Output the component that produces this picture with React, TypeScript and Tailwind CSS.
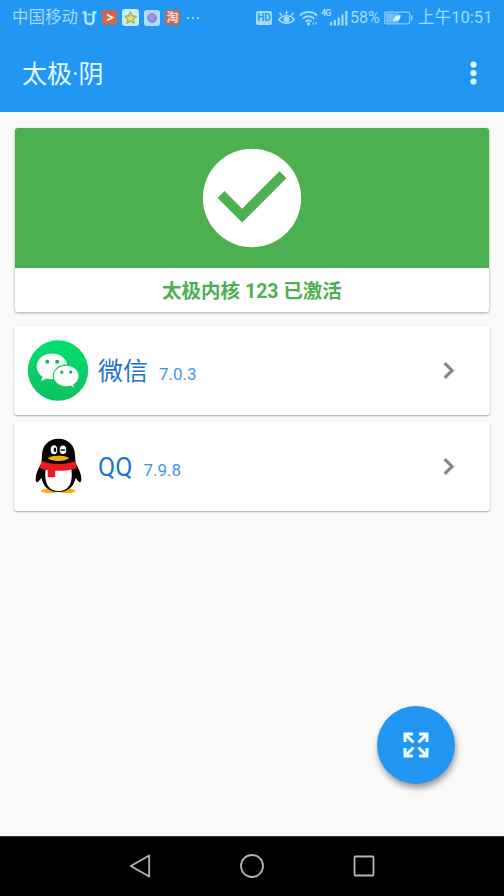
import type { ReactNode } from 'react';

const WechatLogo = () => (
    <svg className="w-[62px] h-[62px]" viewBox="0 0 62 62">
        <defs>
            <linearGradient id="wechatBg" x1="0" y1="0" x2="0" y2="1">
                <stop offset="0" stopColor="#04e06e" />
                <stop offset="1" stopColor="#0cc160" />
            </linearGradient>
        </defs>
        <circle cx="31" cy="30.500" r="30.200" fill="url(#wechatBg)" />
        <path
            d="M25 13.500c-8.600 0-15.300 5.700-15.300 13 0 4.200 2.200 7.800 5.800 10.200l-1.500 4.500 5.300-2.700c1.800.5 3.700.8 5.700.8 8.600 0 15.300-5.600 15.300-12.800S33.600 13.500 25 13.500z"
            fill="#fff"
        />
        <path
            d="M39.200 25.200c-7.200 0-13 4.800-13 10.800s5.800 10.800 13 10.800c1.500 0 3-.2 4.400-.6l4.400 2.300-1.200-3.800c3.300-2 5.400-5.100 5.400-8.700 0-6-5.800-10.800-13-10.800z"
            fill="#fff"
            stroke="#08cf66"
            strokeWidth="1.200"
        />
        <g fill="#10b65c">
            <circle cx="20.300" cy="21.800" r="2" />
            <circle cx="30.200" cy="21.800" r="2" />
            <circle cx="34.800" cy="32.200" r="1.600" />
            <circle cx="43.700" cy="32.200" r="1.600" />
        </g>
    </svg>
);

const QQLogo = () => (
    <svg className="w-[62px] h-[62px]" viewBox="0 0 62 62">
        <ellipse cx="22.500" cy="54.800" rx="8.500" ry="2.300" fill="#faab07" />
        <ellipse cx="40" cy="54.800" rx="8.500" ry="2.300" fill="#faab07" />
        <path
            d="M31.500 2.700C21.500 2.700 15 9.500 15 19.500L14.500 27c-2.400 4.500-5.800 10-5.800 16 0 3.500 1.500 4.200 3 2.300l2.800-3.300C16 50.500 22 56 31.500 56S47 50.500 48.500 42l2.800 3.300c1.500 1.900 3 1.200 3-2.300 0-6-3.400-11.500-5.800-16L48 19.500C48 9.500 41.500 2.700 31.500 2.700z"
            fill="#000"
        />
        <path d="M19 31C16.500 45 20 55 31.500 55S46.500 45 44 31z" fill="#fff" />
        <path d="M14.500 25c9.500 4 24.500 4 34 0l1.200 7c-3.700 1.500-8.600 2.500-13.700 2.800h-7.800v6.500h-7.500v-7c-3-.4-5.800-1.200-7.900-2.300z" fill="#eb1c26" />
        <path d="M21 22c3-3 18-3 21 0-2.500 4-18.500 4-21 0z" fill="#faab07" />
        <ellipse cx="27" cy="13.800" rx="3.300" ry="4.500" fill="#fff" />
        <ellipse cx="36" cy="13.800" rx="3.300" ry="4.300" fill="#fff" />
        <ellipse cx="28" cy="13.800" rx="1.300" ry="2.300" fill="#000" />
        <path d="M33.600 14h4.600" fill="none" stroke="#000" strokeWidth="1.400" />
    </svg>
);

const apps: { name: string; version: string; logo: ReactNode }[] = [
    { name: '微信', version: '7.0.3', logo: <WechatLogo /> },
    { name: 'QQ', version: '7.9.8', logo: <QQLogo /> },
];

const StatusBar = () => (
    <div className="flex items-center justify-between h-[35px] pl-3 pr-[11px] text-[#a4dbfb] text-[16.500px] leading-none">
        <div className="flex items-center">
            <span className="w-[70px] pt-px whitespace-nowrap">中国移动</span>
            <svg className="w-[15px] h-4" viewBox="0 0 15 16" fill="none" stroke="#b5ecff" strokeWidth="2.400">
                <path d="M.5 2.500h4M10.500 2.500h4M3.500 2.500v7.800q0 3.700 4 3.700t4-3.700V2.500" />
                <path d="M5.500 4.500h4" strokeWidth="1.400" />
            </svg>
            <svg className="ml-[5px] w-[15px] h-[15px]" viewBox="0 0 15 15">
                <rect width="15" height="15" rx="2.500" fill="#c9694f" />
                <path d="M5 4.600l5.500 2.900L5 10.400" fill="none" stroke="#f3eaf0" strokeWidth="1.800" />
            </svg>
            <svg className="ml-[5px] w-[17px] h-[17px]" viewBox="0 0 17 17">
                <rect width="17" height="17" rx="3" fill="#c5eef3" />
                <path d="M8.500 3.300l1.700 3.500 3.800.6-2.700 2.700.6 3.800-3.400-1.800-3.400 1.800.6-3.800L3 7.400l3.800-.6z" fill="#dce08b" stroke="#b5ae51" strokeWidth="1.400" />
            </svg>
            <svg className="ml-[5px] w-4 h-4" viewBox="0 0 16 16">
                <rect width="16" height="16" rx="3" fill="#b4dcf5" />
                <circle cx="8" cy="8" r="5" fill="#8193e2" />
                <path d="M3.500 6a5 5 0 0 1 9 0L8 8z" fill="#a98bd1" />
                <path d="M8 8l4.800-.8A5 5 0 0 1 9 13z" fill="#5c9af0" />
                <circle cx="8" cy="8" r="1.800" fill="#ca8fb9" />
            </svg>
            <span className="ml-[5px] flex items-center justify-center w-[15px] h-[15px] rounded-[3px] bg-[#bd6b58] text-[#f2dedb] text-[12px] font-bold">淘</span>
            <span className="ml-[7px] flex gap-[3px]">
                <i className="size-[2px] bg-[#a4dbfb]" />
                <i className="size-[2px] bg-[#a4dbfb]" />
                <i className="size-[2px] bg-[#a4dbfb]" />
            </span>
        </div>

        <div className="flex items-center">
            <span className="flex items-center justify-center w-4 h-[14px] rounded-[2px] bg-[#a4dbfb] text-[#2196f3] text-[10px] font-bold">HD</span>
            <svg className="ml-[6px] w-[17px] h-4" viewBox="0 0 17 16" fill="none" stroke="#a4dbfb" strokeWidth="1.700">
                <path d="M.8 9.500c4-5 11.400-5 15.400 0-4 5-11.400 5-15.400 0zM3.800 5.500L1.500 2.800M8.500 4.500V1M13.200 5.500l2.300-2.700" />
                <circle cx="8.500" cy="9.500" r="2.200" fill="#a4dbfb" />
            </svg>
            <svg className="ml-1 w-[19px] h-4" viewBox="0 0 19 16" fill="none" stroke="#a4dbfb" strokeWidth="1.900">
                <path d="M1 5.500c4.700-4.600 12.300-4.600 17 0M3.700 8.600c3.200-3.200 8.400-3.200 11.600 0M6.400 11.600c1.800-1.700 4.400-1.700 6.200 0" />
                <circle cx="9.500" cy="14" r=".8" fill="#a4dbfb" />
                <path d="M14.300 14.500v-2M17 12v2.500" strokeWidth="1.300" />
            </svg>
            <span className="ml-[3px] w-[9px] text-[9px] font-bold tracking-[-0.800px] mb-2">4G</span>
            <svg className="w-[18px] h-4" viewBox="0 0 18 16" fill="#a4dbfb">
                <path d="M0 12h2.200v3.500H0zM3.800 10H6v5.500H3.800zM7.600 7.500h2.200v8H7.600zM11.400 4.500h2.200v11h-2.200zM15.200 1h2.200v14.500h-2.200z" />
            </svg>
            <span className="ml-[2px] w-[32px] pt-px whitespace-nowrap text-[16px]">58%</span>
            <svg className="ml-[2px] w-[30px] h-[14px]" viewBox="0 0 30 14">
                <rect x=".7" y="1.200" width="25" height="11.600" rx="1.500" fill="none" stroke="#8bcdf8" strokeWidth="1.200" />
                <rect x="2" y="2.500" width="13" height="9" fill="#74bdf5" />
                <path d="M9.500 10.800c0-4.500 2.500-6.500 7-6.800.3 4-2 6.300-5.500 5.700l-.8 1.300z" fill="#d0f4ff" />
                <path d="M27 4.500h1.500v5H27z" fill="#8bcdf8" />
            </svg>
            <span className="ml-[4px] w-[75px] pt-px whitespace-nowrap text-[16.600px]">上午10:51</span>
        </div>
    </div>
);

const App = () => {
    return (
        <div className="flex flex-col w-[504px] h-[896px] bg-[#fafafa] overflow-hidden font-['Roboto','Noto_Sans_CJK_SC',sans-serif]">
            <header className="h-28 shrink-0 bg-[#2196f3]">
                <StatusBar />
                <div className="flex items-center justify-between h-[77px] pl-[22px] pr-[27px]">
                    <h1 className="pt-[2px] text-[25px] leading-none text-[#e2fbff]">太极·阴</h1>
                    <svg className="w-[7px] h-6 mb-px" viewBox="0 0 7 24" fill="#e2fbff">
                        <circle cx="3.500" cy="3.500" r="3.100" />
                        <circle cx="3.500" cy="12" r="3.100" />
                        <circle cx="3.500" cy="20.500" r="3.100" />
                    </svg>
                </div>
            </header>

            <main className="relative flex-1 px-[14px] pt-4">
                <section className="mx-px h-[184px] rounded-[3px] bg-white overflow-hidden shadow-[0_1px_3px_rgba(0,0,0,0.35)]">
                    <div className="flex items-center justify-center h-[140px] bg-[#4caf50]">
                        <svg className="w-[118px] h-[118px]" viewBox="0 0 24 24">
                            <circle cx="12" cy="12" r="10" fill="#fff" />
                            <path d="M10 17l-5-5 1.410-1.410L10 14.170l7.590-7.590L19 8z" fill="#4caf50" />
                        </svg>
                    </div>
                    <p className="h-11 text-center text-[19.500px] leading-[48px] font-bold text-[#4caf50]">太极内核 123 已激活</p>
                </section>

                <div className="flex flex-col gap-[7px] mt-[14px]">
                    {apps.map((app) => (
                        <div key={app.name} className="flex items-center h-[89px] pl-[13px] pr-[25px] rounded-[3px] bg-white shadow-[0_1px_2px_rgba(0,0,0,0.32)]">
                            {app.logo}
                            <div className="flex items-baseline ml-[9px] mt-[3px]">
                                <span className="text-[25px] leading-8 text-[#2074ca]">{app.name}</span>
                                <span className="ml-[11px] text-[17px] text-[#3f97e8]">{app.version}</span>
                            </div>
                            <svg className="ml-auto w-[33px] h-[33px]" viewBox="0 0 24 24" fill="#858585" stroke="#858585" strokeWidth=".4">
                                <path d="M10 6L8.590 7.410 13.170 12l-4.580 4.590L10 18l6-6z" />
                            </svg>
                        </div>
                    ))}
                </div>

                <button className="absolute right-[49px] bottom-[52px] flex items-center justify-center size-[78px] rounded-full bg-[#2196f3] shadow-[1px_4px_6px_rgba(0,0,0,0.4)]">
                    <svg className="size-[26px]" viewBox="0 0 26 26" fill="none" stroke="#f2fdff" strokeWidth="3">
                        <path d="M10 2H2v8M16 2h8v8M10 24H2v-8M16 24h8v-8" />
                        <path d="M2.500 2.500l8 8M23.500 2.500l-8 8M2.500 23.500l8-8M23.500 23.500l-8-8" />
                    </svg>
                </button>
            </main>

            <nav className="flex items-center justify-between h-[60px] shrink-0 px-[129px] pb-px bg-black border-t border-[#333]">
                <svg className="w-[22px] h-6" viewBox="0 0 22 24" fill="none" stroke="#b3b3b3" strokeWidth="1.800" strokeLinejoin="round">
                    <path d="M20.200 1.500v21L1.800 12z" />
                </svg>
                <svg className="w-6 h-6" viewBox="0 0 24 24" fill="none" stroke="#b3b3b3" strokeWidth="1.800">
                    <circle cx="12" cy="12" r="11" />
                </svg>
                <svg className="w-[22px] h-[22px]" viewBox="0 0 22 22" fill="none" stroke="#b3b3b3" strokeWidth="1.800">
                    <rect x="1.500" y="1.500" width="19" height="19" rx=".8" />
                </svg>
            </nav>
        </div>
    );
};

export default App;
